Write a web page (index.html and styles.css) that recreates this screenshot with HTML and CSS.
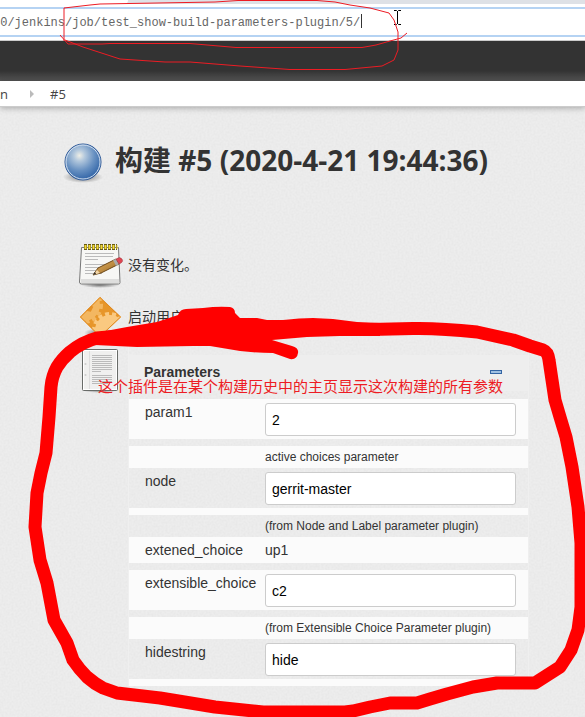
FILE: index.html
```html
<!DOCTYPE html>
<html lang="zh-CN">
<head>
<meta charset="utf-8">
<title>构建 #5</title>
<link rel="stylesheet" href="styles.css">
</head>
<body>
<svg class="grain" aria-hidden="true"><filter id="noise"><feTurbulence type="fractalNoise" baseFrequency="0.5" numOctaves="2" seed="4"/><feColorMatrix values="0 0 0 0 0.4  0 0 0 0 0.4  0 0 0 0 0.4  0.16 0 0 0 -0.05"/></filter><rect width="100%" height="100%" filter="url(#noise)"/></svg>
<div class="tabs"><span class="tab"></span></div>
<div class="address"><input class="url" type="text" aria-label="URL" value="80/jenkins/job/test_show-build-parameters-plugin/5/"></div>
<header class="banner"></header>
<nav class="crumbs"><a href="#">n</a><svg class="arrow" width="6" height="8" viewBox="0 0 6 8"><path d="M1 0L5 4L1 8Z" fill="#bbb"/></svg><a href="#">#5</a></nav>
<main>
  <h1><svg class="icon" viewBox="0 0 48 48">
    <defs><radialGradient id="ball" cx=".4" cy=".32" r=".7"><stop offset="0" stop-color="#eeeee6"/><stop offset=".22" stop-color="#b3c8dd"/><stop offset=".6" stop-color="#6790c1"/><stop offset="1" stop-color="#2d61a5"/></radialGradient><radialGradient id="shade"><stop offset="0" stop-color="#555" stop-opacity=".8"/><stop offset="1" stop-color="#555" stop-opacity="0"/></radialGradient></defs>
    <ellipse cx="24" cy="39" rx="20" ry="6" fill="url(#shade)"/><circle cx="24" cy="24" r="18" fill="url(#ball)" stroke="#2c5796"/><circle cx="24" cy="24" r="17" fill="none" stroke="#d4e1f0"/></svg><span>构建 #5 (2020-4-21 19:44:36)</span></h1>
  <section class="summary">
    <div class="item"><svg class="icon" viewBox="0 0 48 48">
      <defs><linearGradient id="pencil" x2="1" y2="1"><stop stop-color="#ebb967"/><stop offset="1" stop-color="#94631f"/></linearGradient></defs>
      <ellipse cx="24" cy="44" rx="19" ry="3" fill="url(#shade)"/>
      <path d="M5.500 6.500h37l1.500 35q0 1.500-1.500 1.500h-37q-2 0-2-2z" fill="#f7f7f5" stroke="#777"/><path d="M5 39h38M5 41h38" stroke="#c5c5c5"/>
      <path d="M9 12.500h29M9 15.500h28M9 18.500h13M9 23.500h24M9 26.500h22M9 29.500h12M9 32.500h17" stroke="#bbb"/>
      <path d="M7 4h33" stroke="#685b13" stroke-width="6" stroke-dasharray="3 1" transform="translate(1 2)"/><path d="M8.500 6h33" stroke="#f2d936" stroke-width="4" stroke-dasharray="2 2"/>
      <path d="M17 34L22 27L40 18L43 23L25 32Z" fill="url(#pencil)" stroke="#6c4718"/><path d="M17 34l4-5 3 3z" fill="#f2d6a8"/><path d="M17 34l2-3 1 2z" fill="#222"/><path d="M37 19l3-1 3 5-3 2z" fill="#aaa"/><path d="M40 18q4-3 6 0 2 3-3 5z" fill="#df4652" stroke="#9b333d" stroke-width=".5"/></svg><span>没有变化。</span></div>
    <div class="item"><svg class="icon" viewBox="0 0 48 48">
      <defs><clipPath id="diamond"><path d="M24 4L45 24L24 44L4 24Z"/></clipPath></defs>
      <ellipse cx="24" cy="40" rx="16" ry="5" fill="url(#shade)"/><g clip-path="url(#diamond)"><path d="M3 3h43v42H3z" fill="#e7962a"/><circle cx="8" cy="12" r="16" fill="#f3b761"/><circle cx="8" cy="12" r="17" fill="none" stroke="#f3b761" stroke-width="4" stroke-dasharray="4 3"/><path d="M5 21l4-5 5 1 2-4" fill="none" stroke="#e69127" stroke-width="3"/><circle cx="34" cy="37" r="15" fill="#fac980"/><circle cx="34" cy="37" r="16" fill="none" stroke="#fac980" stroke-width="4" stroke-dasharray="4 3"/></g><path d="M24 4.500L44.500 24L24 43.500L4.500 24Z" fill="none" stroke="#df8920"/></svg><span>启动用户</span></div>
    <div class="item item-params"><svg class="icon" viewBox="0 0 48 48">
      <ellipse cx="24" cy="45" rx="18" ry="3" fill="url(#shade)"/><rect x="6.500" y="4.500" width="35" height="41" rx="1" fill="#f0f0ef" stroke="#686b68"/><rect x="7.500" y="5.500" width="33" height="39" fill="none" stroke="#fff"/><path d="M13.500 6v38" stroke="#ddd"/><path d="M16 10.500h20M16 12.500h20M16 14.500h20M16 16.500h20M16 18.500h20M16 20.500h20M16 22.500h20M16 24.500h20M16 26.500h9M16 30.500h20M16 32.500h20M16 34.500h20M16 36.500h20M16 38.500h16" stroke="#bbb"/><circle cx="9.500" cy="19" r="1" fill="#ccc"/><circle cx="9.500" cy="30" r="1" fill="#ccc"/></svg>
      <form class="params">
        <div class="head"><strong>Parameters</strong><button type="button" class="collapse" aria-label="Collapse"></button></div>
        <div class="row light"><label for="p1">param1</label><input id="p1" value="2"></div>
        <div class="gap"></div>
        <div class="note light">active choices parameter</div>
        <div class="row"><label for="p2">node</label><input id="p2" value="gerrit-master"></div>
        <div class="gap light"></div>
        <div class="note">(from Node and Label parameter plugin)</div>
        <div class="row plain light"><span>extened_choice</span><span>up1</span></div>
        <div class="gap"></div>
        <div class="row light"><label for="p3">extensible_choice</label><input id="p3" value="c2"></div>
        <div class="gap"></div>
        <div class="note light">(from Extensible Choice Parameter plugin)</div>
        <div class="row"><label for="p4">hidestring</label><input id="p4" value="hide"></div>
        <div class="gap light"></div>
      </form>
    </div>
  </section>
</main>
<p class="remark">这个插件是在某个构建历史中的主页显示这次构建的所有参数</p>
<svg class="ink" width="585" height="717" viewBox="0 0 585 717" aria-hidden="true">
  <path d="M361.500 14v14" stroke="#333"/>
  <path d="M394 10.500h2.500l1 1 1-1h2.500M397.500 11v13M394 24.500h2.500l1-1 1 1h2.500" fill="none" stroke="#000"/>
  <path d="M60 35L68 44H102L110 43.500H190L236 47.500H362L376 45L390 41L401 38L407 33M64 41V8L90 5L100 4L215 2L238 .5H317L335 2L350 5L370 8L389 13L394 20L398 32V50L394 60L382 66L345 69.500H290L240 66L190 62L165 62L120 59L83 47L65 40" fill="none" stroke="#ed1c24"/>
  <path d="M140 336Q112 336 97 338Q82 342 70 352Q62 359 57 367Q52 376 51 387L49 417L46 453L41 473L37 493L35 527L40 560L47 583L54 620L67 643L73 660Q79 669 87 677Q95 684 103 688L117 693L160 698L215 707L263 712H345L353 711L370 707L390 703H417L430 699L447 694L473 687L497 683H535L560 667L571 650L578 630L581 607V543L578 507L572 467L566 437L560 417L555 400L552 380L549 360Q548 352 543 350L530 346L513 340L477 332Q440 328 413 328.500L370 329.500" fill="none" stroke="red" stroke-width="13" stroke-linejoin="round"/>
  <path d="M95 333L127 327L157 322L178 315Q180 309 186 309L203 308Q218 306 230 307Q235 308 235 313L240 318H257L267 320L283 320Q300 318 313 318L333 319L357 322L380 323V336H340L307 337L272 340L292 346Q299 348 298 353Q297 360 290 359L273 353Q257 353 240 351L210 346H193L137 347L95 345Z" fill="red"/>
</svg>
</body>
</html>
```

FILE: styles.css
```css
* { box-sizing: border-box; }
body {
  margin: 0;
  position: relative;
  min-height: 100vh;
  overflow: hidden;
  background: #ededed;
  color: #333;
  font: 14px/20px "Liberation Sans", "Noto Sans CJK SC", sans-serif;
}
.grain { position: absolute; inset: 0; width: 100%; height: 100%; z-index: -1; }
.tabs { height: 4px; background: #dee1e6; }
.tab { display: block; width: 128px; height: 4px; background: #fff; border-bottom-right-radius: 4px; }
.address { padding: 3px 0; background: #fff; border-bottom: 1px solid #ccc; }
.url {
  display: block;
  width: 100%;
  height: 30px;
  padding: 2px 0 0;
  border: solid #b5d3f3;
  border-width: 2px 0;
  background: #fff;
  color: #666;
  font: 12px "Liberation Mono", monospace;
  text-indent: -7px;
}
.banner { height: 40px; background: linear-gradient(#333 75%, #555); }
.crumbs {
  display: flex;
  align-items: center;
  height: 26px;
  background: #fff;
  border-bottom: 1px solid #ccc;
  box-shadow: 0 1px 6px rgba(0, 0, 0, .3);
  font: 13px/20px "Open Sans", sans-serif;
}
.crumbs a { color: #444; text-decoration: none; }
.arrow { margin: 0 15px 0 21px; }
main { padding: 31px 56px 24px 59px; }
h1 {
  display: flex;
  align-items: flex-start;
  gap: 8px;
  height: 48px;
  margin: 0;
  font: bold 28px/44px "Open Sans", "Noto Sans CJK SC", sans-serif;
  white-space: nowrap;
}
.icon { flex: none; width: 48px; height: 48px; }
.summary { display: flex; flex-direction: column; gap: 4px; padding: 55px 0 0 17px; }
.item { display: flex; align-items: center; gap: 4px; }
.item-params { align-items: flex-start; }
.params { flex: 1; min-width: 0; padding-top: 10px; border: solid #efefef; border-width: 0 1px; }
.head {
  display: flex;
  align-items: center;
  justify-content: space-between;
  height: 36px;
  margin-bottom: 8px;
  padding: 0 26px 2px 15px;
  background: #eee;
}
.collapse { width: 12px; height: 4px; padding: 0; border: 1px solid #3465a4; background: #9fc0e2; }
.light { background: #fbfbfb; }
.row { display: grid; grid-template-columns: 120px 1fr; padding: 4px 12px 3px 16px; }
.row label { line-height: 18px; }
.row.plain { padding: 3px 12px 3px 16px; }
.row input {
  width: 100%;
  height: 33px;
  padding: 0 6px;
  border: 1px solid #ccc;
  border-radius: 3px;
  background: #fff;
  color: #000;
  font: 14px "Liberation Sans", sans-serif;
}
.gap { height: 7px; }
.note { padding-left: 136px; font-size: 12px; line-height: 22px; }
.remark {
  position: absolute;
  top: 375px;
  left: 98px;
  margin: 0;
  color: #ed1c24;
  font: 15px/22px "Noto Sans CJK SC", sans-serif;
  white-space: nowrap;
}
.ink { position: absolute; top: 0; left: 0; pointer-events: none; }
```
